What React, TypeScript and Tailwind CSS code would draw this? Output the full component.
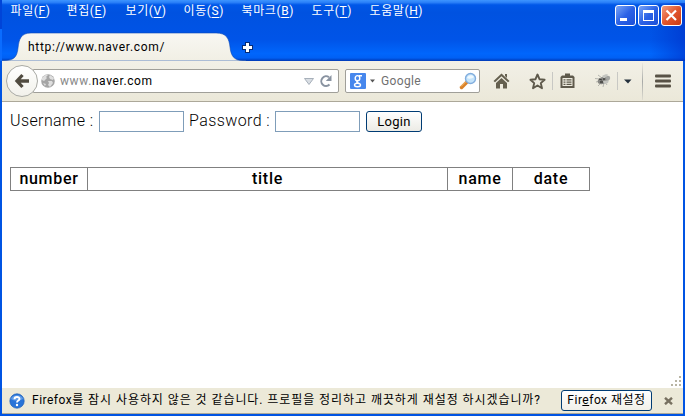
import React from "react";

const menus = [
  { label: "파일", key: "F", width: "w-[56px]" },
  { label: "편집", key: "E", width: "w-[59px]" },
  { label: "보기", key: "V", width: "w-[58px]" },
  { label: "이동", key: "S", width: "w-[58px]" },
  { label: "북마크", key: "B", width: "w-[70px]" },
  { label: "도구", key: "T", width: "w-[58px]" },
  { label: "도움말", key: "H", width: "w-[60px]" },
];

const columns = [
  { name: "number", width: "w-[77px]" },
  { name: "title", width: "w-[360px]" },
  { name: "name", width: "w-[65px]" },
  { name: "date", width: "w-[77px]" },
];

function CaptionButton({ close = false, children }: { close?: boolean; children: React.ReactNode }) {
  const fill = close
    ? "bg-linear-to-br from-[#f09a7c] via-[#e2552c] to-[#c83a12]"
    : "bg-linear-to-br from-[#7ba4f5] via-[#2c62e6] to-[#1a4fd8]";
  return (
    <button className={`h-[21px] w-[21px] rounded-[3px] border border-white ${fill}`}>
      <svg viewBox="0 0 19 19" className="block h-[19px] w-[19px]" shapeRendering="crispEdges">
        {children}
      </svg>
    </button>
  );
}

function TitleBar() {
  return (
    <header className="relative h-[61px] shrink-0 bg-[#0052e2]">
      <svg className="absolute inset-0" width="685" height="61" viewBox="0 0 685 61">
        <defs>
          <linearGradient id="caption" x2="0" y2="1">
            <stop offset="0" stopColor="#3d95ff" />
            <stop offset=".04" stopColor="#2a80f8" />
            <stop offset=".08" stopColor="#0057e8" />
            <stop offset=".2" stopColor="#0052e0" />
            <stop offset=".65" stopColor="#0054e8" />
            <stop offset=".88" stopColor="#0066fc" />
            <stop offset=".95" stopColor="#0060f4" />
            <stop offset="1" stopColor="#0038b4" />
          </linearGradient>
          <linearGradient id="edge">
            <stop offset="0" stopColor="#0034c8" stopOpacity="0" />
            <stop offset="1" stopColor="#0030c8" stopOpacity=".6" />
          </linearGradient>
          <linearGradient id="tab" x2="0" y2="1">
            <stop offset="0" stopColor="#f8f7f2" />
            <stop offset="1" stopColor="#f1efe4" />
          </linearGradient>
        </defs>
        <path d="M0 0H685V61H0Z" fill="url(#caption)" />
        <path d="M650 3H685V61H650Z" fill="url(#edge)" />
        <path d="M0 61V60.5H4C14 60.5 17 57 18 48C19 39 21 33 31 33H216C227 33 229 39 230 47C231 56 234 60.5 243 60.5H246V61Z" fill="url(#tab)" stroke="#0a46b4" strokeWidth=".6" />
        <path d="M0 0H2V29H0Z" fill="#0044d8" />
        <path d="M0 29H2V61H0Z" fill="#0a6cff" />
        <path d="M245 42h5v3h3v5h-3v3h-5v-3h-3v-5h3Z" fill="#062b75" />
        <path d="M246 43h3v3h3v3h-3v3h-3v-3h-3v-3h3Z" fill="#fff" />
      </svg>
      <div className="relative flex h-[33px] items-start justify-between">
        <nav className="flex pl-[10.500px] pt-[3px] text-[12px] font-normal leading-[17px] tracking-[0.600px] text-white">
          {menus.map((m) => (
            <span key={m.key} className={`${m.width} whitespace-nowrap`}>
              {m.label}(<u className="underline-offset-2">{m.key}</u>)
            </span>
          ))}
        </nav>
        <div className="flex gap-[2px] pr-[3px] pt-[5px]">
          <CaptionButton><path d="M4 12h7v3H4Z" fill="#fff" /></CaptionButton>
          <CaptionButton><path d="M4 4h11v11H4ZM5 7v7h9V7Z" fill="#fff" fillRule="evenodd" /></CaptionButton>
          <CaptionButton close><path d="M4.500 4.500L14 14M14 4.500L4.500 14" stroke="#fff" strokeWidth="2.200" shapeRendering="auto" /></CaptionButton>
        </div>
      </div>
      <div className="relative pl-[28px] pt-[5px] text-[12px] font-normal leading-[18px] tracking-[0.700px]">http://www.naver.com/</div>
    </header>
  );
}

function Separator() {
  return <i className="h-[18px] w-px bg-[#c8c8c4]" />;
}

function Toolbar() {
  return (
    <div className="flex h-[41px] shrink-0 items-center border-b border-[#aca899] bg-linear-to-b from-[#f2f0e7] to-[#ebe8d9] pl-[4px]">
      <button className="z-10 flex h-[32px] w-[32px] shrink-0 items-center justify-center rounded-full border border-[#a9aaa5] bg-linear-to-b from-white to-[#f2f1eb]">
        <svg width="16" height="16" viewBox="0 0 16 16"><path d="M8.500 2L3 8L8.500 14M3.500 8H15" fill="none" stroke="#504b40" strokeWidth="3.300" /></svg>
      </button>
      <div className="-ml-[5px] flex h-[24px] w-[306px] items-center rounded-r-[2px] border border-[#a09f99] bg-white pl-[6px] text-[12px]">
        <svg width="16" height="16" viewBox="0 0 16 16">
          <circle cx="8" cy="8" r="6.800" fill="#a5a5a5" />
          <path d="M2 5C4 2 7 1 8 2L6 4L7 5L4 8L2 7ZM10 2L14 5L13 7L10 6L9 4ZM8 8L12 8L13 10L10 14L8 12L9 10ZM3 10L6 11L5 13Z" fill="#dedede" />
        </svg>
        <span className="ml-[4px] whitespace-nowrap font-normal tracking-[0.600px] text-black"><span className="text-[#888]">www.</span>naver.com</span>
        <svg className="ml-auto" width="12" height="9" viewBox="0 0 12 9"><path d="M1.500 1.500H10.500L6 7.500Z" fill="#d8dde3" stroke="#a7b0ba" /></svg>
        <svg className="ml-[4px] mr-[5px]" width="14" height="14" viewBox="0 0 14 14"><path d="M10.500 10.500A4.800 4.800 0 1 1 10 3.300" fill="none" stroke="#8993a1" strokeWidth="2" /><path d="M12.500 1V7H6.800Z" fill="#8993a1" /></svg>
      </div>
      <div className="ml-[6px] flex h-[24px] w-[135px] items-center rounded-[2px] border border-[#a09f99] bg-white pl-[4px] text-[12px] text-[#707070]">
        <span className="flex h-[16px] w-[16px] items-center justify-center rounded-[1px] bg-[#4787ed]">
          <svg width="12" height="16" viewBox="0 0 12 16" fill="none" stroke="#fff" strokeWidth="1.400"><ellipse cx="5.500" cy="5.200" rx="2.300" ry="2.600" /><path d="M7 2.700H10M6 8C3 9 6 10 7.500 10.700" /><ellipse cx="5.500" cy="12" rx="3" ry="1.800" /></svg>
        </span>
        <svg className="ml-[4px]" width="5" height="4" viewBox="0 0 5 4"><path d="M0 .5H5L2.500 3.500Z" fill="#555" /></svg>
        <span className="ml-[6px] font-normal tracking-[0.350px]">Google</span>
        <svg className="ml-auto mr-[2px]" width="18" height="18" viewBox="0 0 18 18">
          <path d="M2.500 15.500L7.500 10.500" stroke="#d9822a" strokeWidth="3.500" strokeLinecap="round" />
          <path d="M2 14.500L6.500 10" stroke="#f8be70" />
          <circle cx="11.500" cy="6.500" r="5" fill="#c5e4fb" stroke="#82aede" strokeWidth="1.400" />
          <path d="M8 6C9 3 13 2 15 5C13 7 10 7 8 6Z" fill="#eff9ff" />
        </svg>
      </div>
      <svg className="ml-[13px]" width="17" height="16" viewBox="0 0 17 16" fill="#65604f"><path d="M8.500.5L16.500 8L15 9.300L8.500 3.300L2 9.300L.5 8Z" /><path d="M8.500 5L14 10V15.500H10V11H7V15.500H3V10ZM12 1h2v4l-2-2Z" /></svg>
      <svg className="ml-[19px]" width="17" height="17" viewBox="0 0 17 17"><path d="M8.500 1.500L10.600 6.300L15.600 6.800L11.800 10.100L13 15.300L8.500 12.500L4 15.300L5.200 10.100L1.400 6.800L6.400 6.300Z" fill="none" stroke="#5e594b" strokeWidth="1.900" strokeLinejoin="round" /></svg>
      <div className="ml-[6px] flex"><Separator /></div>
      <svg className="ml-[7px]" width="15" height="16" viewBox="0 0 15 16"><path d="M5 .5h5v2h3l1.500 1.500V15H.5V4L2 2.500H5ZM2.500 5v8h10V5Z" fill="#5e594b" fillRule="evenodd" /><path d="M3.500 6.200h2v1.300h-2Zm3 0h5v1.300h-5ZM3.500 8.500h2v1.300h-2Zm3 0h5v1.300h-5ZM3.500 10.800h2v1.300h-2Zm3 0h5v1.300h-5Z" fill="#5e594b" /></svg>
      <svg className="ml-[19px]" width="17" height="14" viewBox="0 0 17 14">
        <path d="M1 4.500L6 5M4 1L8 4M2 8L6 7M4 12L7 9M9 13L10 9M13 11L11 8" stroke="#b6b6af" />
        <ellipse cx="9" cy="6.500" rx="5.500" ry="3.500" transform="rotate(-18 9 6.500)" fill="#868683" />
        <path d="M8 2C11 0 14 0 14 1L10 5ZM9 7L15 6L14 9L10 10Z" fill="#c4c5c0" />
        <circle cx="14" cy="4" r="2.200" fill="#a3a4a1" /><path d="M5 5l3 1M6 8l3 0M9 5h2" stroke="#40403e" strokeWidth="1.300" />
      </svg>
      <div className="ml-[6px] flex"><Separator /></div>
      <svg className="ml-[6px]" width="8" height="5" viewBox="0 0 8 5"><path d="M0 .5H7.500L4 4.500Z" fill="#24303d" /></svg>
      <i className="ml-[10px] h-[37px] w-px bg-linear-to-b from-[#ebe9df] via-[#a8aaa8] to-[#dfddd1]" />
      <svg className="ml-[12px]" width="16" height="14" viewBox="0 0 16 14" fill="#585246"><rect y=".5" width="16" height="3" rx="1" /><rect y="5.500" width="16" height="3" rx="1" /><rect y="10.500" width="16" height="3" rx="1" /></svg>
    </div>
  );
}

export default function App() {
  return (
    <div className="flex h-[416px] w-[685px] flex-col overflow-hidden bg-[#0054e3] font-[Roboto,'Noto_Sans_CJK_KR',sans-serif] font-light text-black">
      <TitleBar />
      <div className="mb-[2px] ml-[2px] mr-[2px] flex min-h-0 flex-1 flex-col bg-white">
        <Toolbar />
        <main className="relative min-h-0 flex-1 px-[8px] pt-[8px]">
          <form className="flex h-[23px] items-center text-[16px] leading-[20px]" onSubmit={(e) => e.preventDefault()}>
            <label className="w-[89px] whitespace-nowrap pb-[2px] tracking-[0.400px]">Username :</label>
            <input className="h-[21px] w-[85px] border border-[#7f9db9] bg-white outline-none" />
            <label className="ml-[5px] w-[86px] whitespace-nowrap pb-[2px] tracking-[0.400px]">Password :</label>
            <input type="password" className="h-[21px] w-[85px] border border-[#7f9db9] bg-white outline-none" />
            <button className="ml-[6px] h-[21px] w-[56px] rounded-[3px] border border-[#003c74] bg-linear-to-b from-white to-[#ecebe5] text-[13px] font-normal leading-[19px] tracking-[0.300px]">Login</button>
          </form>
          <table className="mt-[34px] w-[580px] table-fixed border-collapse text-[16px] leading-[22px]">
            <thead>
              <tr>
                {columns.map((c) => (
                  <th key={c.name} className={`${c.width} h-[23px] border border-[#808080] p-0 font-medium tracking-[0.700px]`}>{c.name}</th>
                ))}
              </tr>
            </thead>
          </table>
          <svg className="absolute bottom-[2px] right-[2px]" width="10" height="10" viewBox="0 0 10 10" fill="#b8b4a3"><path d="M8 0h2v2H8ZM4 4h2v2H4ZM8 4h2v2H8ZM0 8h2v2H0ZM4 8h2v2H4ZM8 8h2v2H8Z" /></svg>
        </main>
        <footer className="flex h-[26px] shrink-0 items-center border-b border-[#aca899] bg-[#ece9d8] pl-[7px] text-[12px] font-normal">
          <svg width="16" height="16" viewBox="0 0 16 16"><circle cx="8" cy="8" r="7.200" fill="#2874d8" stroke="#1d5eb9" strokeWidth=".7" /><path d="M2 6C3 1 13 1 14 6C10 8 5 8 2 6Z" fill="#609ce8" /><path d="M5.500 6.200C5.500 3.300 10.500 3.400 10.500 6C10.500 7.700 8 7.500 8 9.600" fill="none" stroke="#fff" strokeWidth="1.900" /><circle cx="8" cy="12" r="1.200" fill="#fff" /></svg>
          <span className="ml-[7px] w-[529px] whitespace-nowrap pb-[2px] tracking-[0.930px]"><span className="tracking-[0.500px]">Firefox</span>를 잠시 사용하지 않은 것 같습니다. 프로필을 정리하고 깨끗하게 재설정 하시겠습니까?</span>
          <button className="h-[21px] w-[91px] whitespace-nowrap rounded-[3px] border border-[#003c74] bg-linear-to-b from-white to-[#f1f0e9] leading-[19px] tracking-[0.500px]">Fir<u className="underline-offset-1">e</u>fox 재설정</button>
          <svg className="ml-[12px]" width="9" height="8" viewBox="0 0 9 8"><path d="M1 .8L8 7.200M8 .8L1 7.200" stroke="#777060" strokeWidth="2.400" /></svg>
        </footer>
      </div>
    </div>
  );
}
